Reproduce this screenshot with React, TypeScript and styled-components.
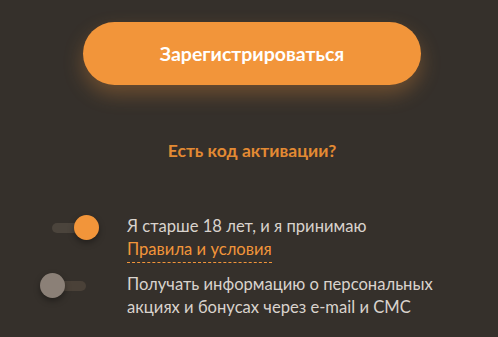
import React from 'react'
import styled, { createGlobalStyle } from 'styled-components'

const GlobalStyle = createGlobalStyle`
  html, body {
    margin: 0;
    padding: 0;
    background: #35302b;
  }
  body {
    font-family: Lato, "Open Sans", sans-serif;
  }
`

export default function App() {
  return (
    <Page>
      <GlobalStyle />
      <RegisterButton>Зарегистрироваться</RegisterButton>
      <ActivationLink>Есть код активации?</ActivationLink>
      <Options>
        <OptionRow>
          <Toggle $on>
            <Knob $on />
          </Toggle>
          <OptionText>
            Я старше 18 лет, и я принимаю
            <br />
            <RulesLink>Правила и условия</RulesLink>
          </OptionText>
        </OptionRow>
        <OptionRow>
          <Toggle>
            <Knob />
          </Toggle>
          <OptionText>
            Получать информацию о персональных
            <br />
            акциях и бонусах через e-mail и СМС
          </OptionText>
        </OptionRow>
      </Options>
    </Page>
  )
}

const Page = styled.div`
  width: 498px;
  height: 337px;
  box-sizing: border-box;
  padding: 22px 0 0 83px;
  overflow: hidden;
`

const RegisterButton = styled.button`
  display: block;
  width: 338px;
  height: 63px;
  padding: 0;
  border: none;
  border-radius: 32px;
  background: #f2953a;
  color: #ffffff;
  font-family: Lato, sans-serif;
  font-weight: 700;
  font-size: 19.5px;
  box-shadow: 0 9px 20px rgba(242, 149, 58, 0.3);
  cursor: pointer;
`

const ActivationLink = styled.div`
  width: 338px;
  margin-top: 56px;
  text-align: center;
  color: #e38a33;
  font-weight: 700;
  font-size: 17.5px;
  line-height: 20px;
`

const Options = styled.div`
  margin-top: 54px;
  margin-left: -31px;
  display: flex;
  flex-direction: column;
  gap: 13px;
`

const OptionRow = styled.div`
  display: flex;
  align-items: flex-start;
`

const Toggle = styled.div<{ $on?: boolean }>`
  position: relative;
  flex: none;
  width: 34px;
  height: 10px;
  margin-top: 7.5px;
  border-radius: 5px;
  background: ${p => (p.$on ? '#4b443c' : '#4a4138')};
`

const Knob = styled.div<{ $on?: boolean }>`
  position: absolute;
  top: -7.5px;
  left: ${p => (p.$on ? '21.5px' : '-12.5px')};
  width: 25px;
  height: 25px;
  border-radius: 50%;
  background: ${p => (p.$on ? '#f2953a' : '#8b8077')};
  box-shadow: 0 3px 6px rgba(0, 0, 0, 0.35);
`

const OptionText = styled.div`
  margin-left: 41px;
  color: #d9d3cd;
  font-size: 16.6px;
  line-height: 22.5px;
`

const RulesLink = styled.span`
  color: #f2953a;
  border-bottom: 1px dashed #f2953a;
  padding-bottom: 3px;
`
